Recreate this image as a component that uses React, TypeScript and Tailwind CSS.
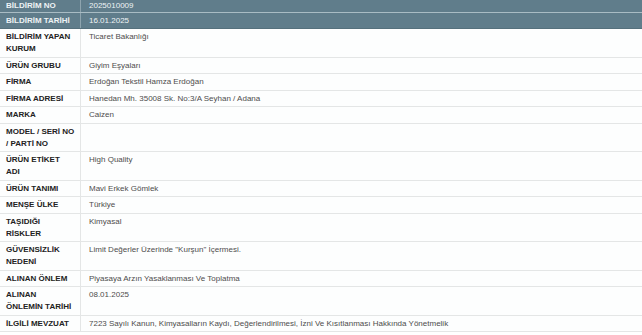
import React from "react";

const rows: [string[], string][] = [
  [["BİLDİRİM YAPAN", "KURUM"], "Ticaret Bakanlığı"],
  [["ÜRÜN GRUBU"], "Giyim Eşyaları"],
  [["FİRMA"], "Erdoğan Tekstil Hamza Erdoğan"],
  [["FİRMA ADRESİ"], "Hanedan Mh. 35008 Sk. No:3/A Seyhan / Adana"],
  [["MARKA"], "Caizen"],
  [["MODEL / SERİ NO", "/ PARTİ NO"], ""],
  [["ÜRÜN ETİKET", "ADI"], "High Quality"],
  [["ÜRÜN TANIMI"], "Mavi Erkek Gömlek"],
  [["MENŞE ÜLKE"], "Türkiye"],
  [["TAŞIDIĞI", "RİSKLER"], "Kimyasal"],
  [["GÜVENSİZLİK", "NEDENİ"], "Limit Değerler Üzerinde \"Kurşun\" İçermesi."],
  [["ALINAN ÖNLEM"], "Piyasaya Arzın Yasaklanması Ve Toplatma"],
  [["ALINAN", "ÖNLEMİN TARİHİ"], "08.01.2025"],
  [
    ["İLGİLİ MEVZUAT"],
    "7223 Sayılı Kanun, Kimyasalların Kaydı, Değerlendirilmesi, İzni Ve Kısıtlanması Hakkında Yönetmelik",
  ],
];

export default function App() {
  return (
    <div
      className="w-[642px] h-[335px] bg-white overflow-hidden text-[8px] leading-[12px]"
      style={{ fontFamily: '"Liberation Sans", Arial, sans-serif' }}
    >
      <div className="bg-[#607d8b] text-[#eef3f5]">
        <div className="grid grid-cols-[81px_1fr] h-[13px] border-b border-[#a9bcc4]">
          <div className="pl-[6px] font-bold border-r border-[#8ea4ae]">BİLDİRİM NO</div>
          <div className="pl-[8px]">2025010009</div>
        </div>
        <div className="grid grid-cols-[81px_1fr] h-[16px] border-b border-[#55707c]">
          <div className="pl-[6px] pt-[2px] font-bold border-r border-[#8ea4ae]">BİLDİRİM TARİHİ</div>
          <div className="pl-[8px] pt-[2px]">16.01.2025</div>
        </div>
      </div>
      <div className="bg-[#fdfefe]">
        {rows.map(([label, value]) => (
          <div
            key={label.join(" ")}
            className={
              "grid grid-cols-[81px_1fr] border-b border-[#e4e6e6] " +
              (label.length > 1 ? "h-[28.5px]" : "h-[16.5px]")
            }
          >
            <div className="pl-[6px] pt-[2px] font-bold text-[#222] border-r border-[#e4e6e6]">
              {label.map((l) => (
                <div key={l} className="whitespace-nowrap">
                  {l}
                </div>
              ))}
            </div>
            <div className="pl-[8px] pt-[2px] text-[#4d4d4d]">{value}</div>
          </div>
        ))}
      </div>
    </div>
  );
}
